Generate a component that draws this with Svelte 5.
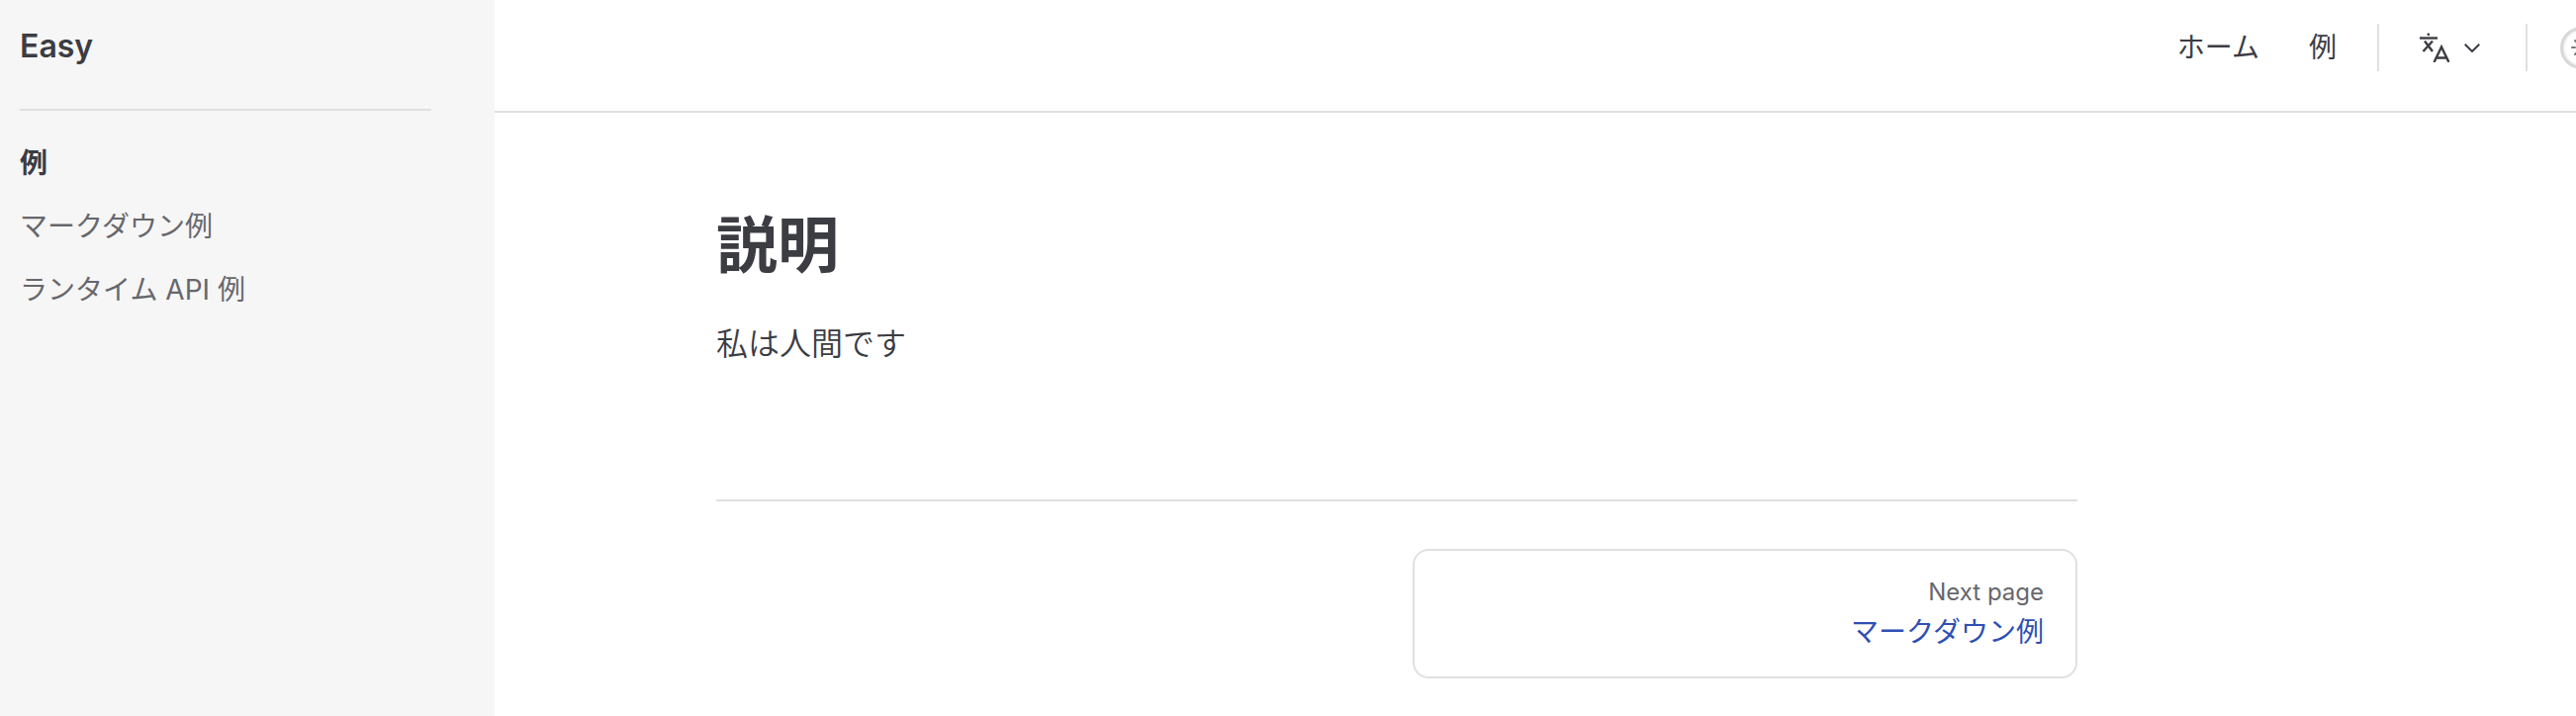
<script>
	const sideLinks = [
		{ label: '例', active: true },
		{ label: 'マークダウン例', active: false },
		{ label: 'ランタイム API 例', active: false }
	];
	const navLinks = ['ホーム', '例'];
</script>

<div class="page">
	<aside class="sidebar">
		<div class="brand">Easy</div>
		<nav class="side-nav">
			{#each sideLinks as link}
				<a href="#top" class:active={link.active}>{link.label}</a>
			{/each}
		</nav>
	</aside>

	<div class="main">
		<header class="topbar">
			<nav class="top-nav">
				{#each navLinks as link}
					<a href="#top">{link}</a>
				{/each}
			</nav>
			<span class="divider"></span>
			<button class="lang" type="button" aria-label="Language">
				<svg class="lang-icon" viewBox="0 0 30 30" width="30" height="30" fill="none" stroke="currentColor" stroke-width="2.4">
					<path d="M0 5.5H18" />
					<circle cx="8.8" cy="1.8" r="1.4" fill="currentColor" stroke="none" />
					<path d="M5 8.5 13 19M13 8.5 3.5 19" />
					<path d="M14.5 30 22 14.5 29.5 30M17 25.5H27" />
				</svg>
				<svg class="chevron" viewBox="0 0 16 9" width="16" height="9" fill="none" stroke="currentColor" stroke-width="2">
					<path d="M0.7 0.7 8 8 15.3 0.7" />
				</svg>
			</button>
			<span class="divider"></span>
			<button class="theme" type="button" aria-label="Theme">
				<svg viewBox="0 0 24 24" width="24" height="24" fill="none" stroke="#777" stroke-width="2" stroke-linecap="round">
					<path d="M12 2v3M12 19v3M2 12h3M19 12h3M5 5l2 2M17 17l2 2M5 19l2-2M17 7l2-2" />
				</svg>
			</button>
		</header>

		<main class="content">
			<h1>説明</h1>
			<p>私は人間です</p>
			<hr />
			<div class="pager">
				<a class="next" href="#top">
					<span class="next-hint">Next page</span>
					<span class="next-title">マークダウン例</span>
				</a>
			</div>
		</main>
	</div>
</div>

<style>
	:global(body) {
		margin: 0;
		overflow: hidden;
		background: #fff;
	}

	.page {
		display: flex;
		width: 2604px;
		height: 724px;
		overflow: hidden;
		font-family: Inter, "Noto Sans CJK JP", sans-serif;
		color: #3c3c43;
	}

	a {
		color: inherit;
		text-decoration: none;
	}

	.sidebar {
		flex: 0 0 500px;
		box-sizing: border-box;
		padding: 0 64px 0 20px;
		background: #f6f6f6;
	}

	.brand {
		height: 112px;
		padding-top: 26px;
		box-sizing: border-box;
		font-size: 32px;
		line-height: 42px;
		font-weight: 600;
		border-bottom: 2px solid #e0e0e1;
	}

	.side-nav {
		display: flex;
		flex-direction: column;
		padding-top: 21px;
	}

	.side-nav a {
		font-size: 28px;
		line-height: 64px;
		color: #67676c;
	}

	.side-nav a.active {
		color: #3c3c43;
		font-weight: 600;
	}

	.main {
		flex: 0 0 2104px;
		min-width: 0;
	}

	.topbar {
		display: flex;
		align-items: center;
		justify-content: flex-end;
		height: 114px;
		box-sizing: border-box;
		padding: 0 0 16px;
		border-bottom: 2px solid #e0e0e1;
	}

	.top-nav {
		display: flex;
		gap: 50px;
		font-size: 28px;
		line-height: 48px;
	}

	.divider {
		width: 2px;
		height: 48px;
		background: #e0e0e1;
	}

	.top-nav + .divider {
		margin-left: 41px;
	}

	.lang {
		display: flex;
		align-items: center;
		gap: 15px;
		padding: 0;
		margin: 0 46px 0 41px;
		border: 0;
		background: none;
		color: #3c3c43;
	}

	.theme {
		flex: 0 0 43px;
		width: 43px;
		height: 43px;
		margin: 0 -27px 0 33px;
		padding: 0;
		display: flex;
		align-items: center;
		justify-content: center;
		border: 3px solid #d8d8da;
		border-radius: 50%;
		background: #fff;
		box-sizing: border-box;
		box-shadow: inset 0 0 3px rgba(0, 0, 0, 0.2);
	}

	.content {
		width: 1376px;
		margin-left: 224px;
		padding-top: 89px;
	}

	h1 {
		margin: 0;
		font-size: 62px;
		line-height: 92px;
		font-weight: 600;
	}

	p {
		margin: 27px 0 0;
		font-size: 32px;
		line-height: 52px;
		font-weight: 350;
	}

	hr {
		margin: 131px 0 0;
		height: 2px;
		border: 0;
		background: #e0e0e1;
	}

	.pager {
		display: flex;
		justify-content: flex-end;
		padding-top: 48px;
	}

	.next {
		display: flex;
		flex-direction: column;
		align-items: flex-end;
		width: 672px;
		height: 131px;
		box-sizing: border-box;
		padding: 24px 32px 0;
		border: 2px solid #e0e0e1;
		border-radius: 16px;
	}

	.next-hint {
		font-size: 24px;
		line-height: 36px;
		color: #67676c;
	}

	.next-title {
		font-size: 28px;
		line-height: 45px;
		color: #2f4fb3;
	}
</style>
